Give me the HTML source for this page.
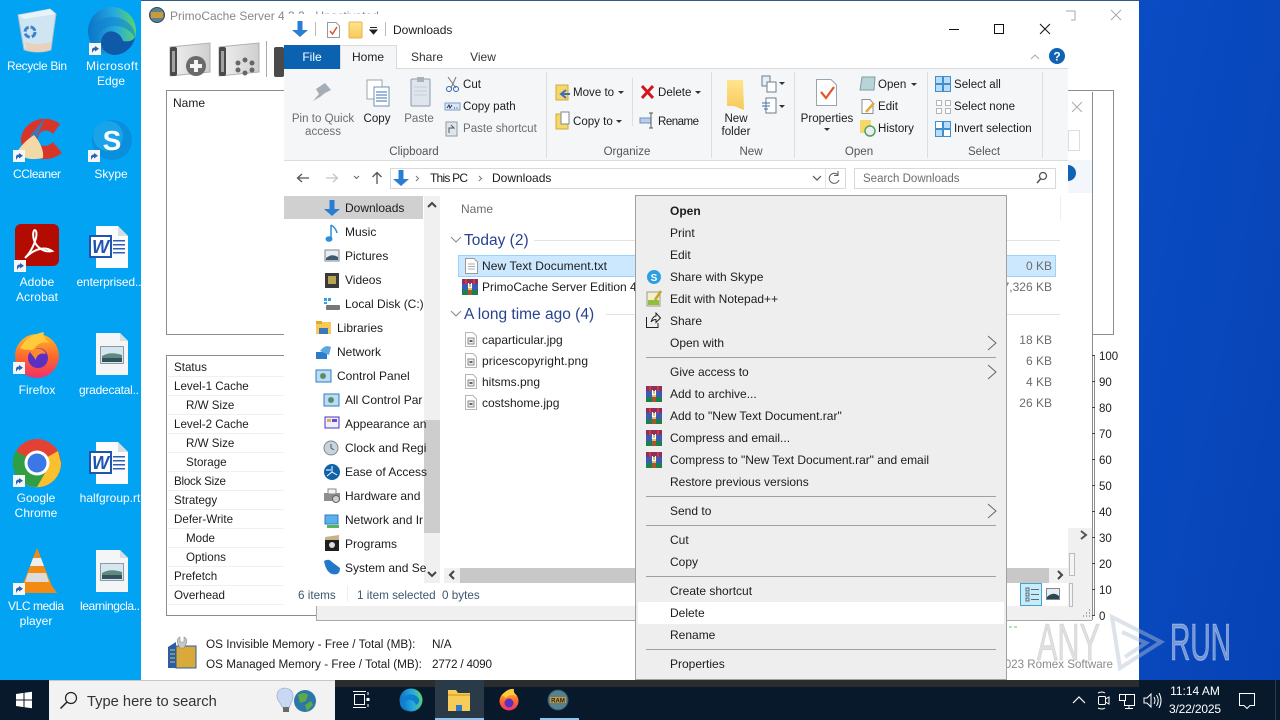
<!DOCTYPE html>
<html><head><meta charset="utf-8"><title>Desktop</title>
<style>
html,body{margin:0;padding:0;width:1280px;height:720px;overflow:hidden;background:#000}
svg{display:block;position:absolute;left:0;top:0;font-size:12px}
text{font-family:"Liberation Sans",sans-serif;fill:#1c1c1c;white-space:pre}
.m{text-anchor:middle}.e{text-anchor:end}
.d{fill:#fff}
.g{fill:#6d6d6d}.r{fill:#444}.h{fill:#2a4390;font-size:15.5px}
</style></head><body>
<svg width="1280" height="720" viewBox="0 0 1280 720" xmlns="http://www.w3.org/2000/svg">
<defs>
<linearGradient id="bl" x1="0" x2="1" y1="0" y2="1"><stop offset="0" stop-color="#0a4cc4"/><stop offset="1" stop-color="#0642b4"/></linearGradient>
<linearGradient id="eg" x1="0" x2="1" y1="0.3" y2="0.2"><stop offset="0" stop-color="#0c74c6"/><stop offset=".55" stop-color="#27a9e0"/><stop offset="1" stop-color="#5ad669"/></linearGradient>
<linearGradient id="ff" x1="0" x2="0" y1="0" y2="1"><stop offset="0" stop-color="#ffb82e"/><stop offset=".5" stop-color="#ff6a2c"/><stop offset="1" stop-color="#f0306a"/></linearGradient>
<linearGradient id="fld" x1="0" x2="0" y1="0" y2="1"><stop offset="0" stop-color="#ffe48e"/><stop offset="1" stop-color="#f7c95a"/></linearGradient>
<linearGradient id="dk" x1="0" x2="1" y1="0" y2="0"><stop offset="0" stop-color="#f0f0f0"/><stop offset="1" stop-color="#cfcfcf"/></linearGradient>
<g id="sc"><rect width="12" height="12" fill="#f4f6f8"/><path d="M3 10 V7 Q3 4.500 6 4.500 V3 L10 5.800 L6 8.500 V7 Q4.500 7 3 10Z" fill="#2a62b4"/></g>
<g id="rar"><rect width="16" height="5" fill="#8c2f5f"/><rect x="3" width="2" height="5" fill="#d23a3a"/><rect x="11" width="2" height="5" fill="#d23a3a"/><rect y="5" width="16" height="6" fill="#3b58bb"/><rect x="6" y="5" width="4" height="6" fill="#d9c36a"/><rect y="11" width="16" height="5" fill="#1e8049"/><rect x="6" y="11" width="4" height="5" fill="#a8552f"/><path d="M6.500 4 V8.500 H9.500 V4" fill="none" stroke="#fff" stroke-width="1.100"/></g>
<g id="pg"><path d="M.5 .5 H8 L11.500 4 V14.500 H.5Z" fill="#fff" stroke="#b5b5b5"/><rect x="3" y="6" width="6" height="6" fill="#eee" stroke="#8a8a8a"/><rect x="4.500" y="8" width="3" height="2" fill="#666"/></g>
<g id="doc"><path d="M0 0 H22 L32 10 V42 H0Z" fill="#fbfcfd"/><path d="M22 0 V10 H32Z" fill="#d8dde2"/><rect x="17" y="14" width="12" height="1.500" fill="#2f5fb2"/><rect x="17" y="18" width="12" height="1.500" fill="#2f5fb2"/><rect x="17" y="22" width="12" height="1.500" fill="#2f5fb2"/><rect x="17" y="26" width="12" height="1.500" fill="#2f5fb2"/><rect x="-6" y="10" width="21" height="21" fill="#fff" stroke="#1f55b0" stroke-width="2"/><text x="4.500" y="27" class="m" style="font-size:18px;font-weight:bold;font-style:italic;fill:#1f55b0">W</text></g>
<g id="imgd"><path d="M0 0 H24 L32 8 V42 H0Z" fill="#f4f5f6"/><path d="M24 0 V8 H32Z" fill="#d8dde2"/><rect x="4.500" y="13.500" width="23" height="17" fill="#d4e6ef" stroke="#8d9aa5"/><path d="M6 23 Q14 18 26 22 V29 H6Z" fill="#5f8a7f"/><rect x="6" y="25" width="20" height="4" fill="#35525c"/></g>
<g id="disk"><path d="M0 4 L40 0 V29 L0 33Z" fill="url(#dk)" stroke="#b0b0b0"/><rect x="0" y="4" width="7" height="29" rx="2" fill="#4a4a4a"/><rect x="2" y="8" width="3" height="21" fill="#a3a3a3"/></g>
</defs>

<!-- desktop -->
<rect width="1280" height="720" fill="#02a3f3"/>
<rect x="1139" width="141" height="720" fill="url(#bl)"/>

<!-- recycle bin -->
<path d="M18 15 L50 9 L56 14 L51 50 Q38 54 24 50Z" fill="#cfe5f2" stroke="#9fbfd2"/>
<path d="M18 15 L50 9 L56 14 L24 19Z" fill="#e8f3f9"/>
<path d="M26 50 Q38 54 50 50 L51 42 Q38 46 25 42Z" fill="#e9d2bb"/>
<circle cx="30" cy="32" r="5" fill="none" stroke="#3b82d0" stroke-width="3" stroke-dasharray="6 2"/>
<!-- edge -->
<circle cx="112" cy="31" r="24" fill="url(#eg)"/>
<path d="M89 36 C90 22 108 12 122 19 C131 23 136 31 135 38 C130 28 116 22 104 29 C96 34 94 44 100 50 C94 47 89 42 89 36Z" fill="#0f7fd0" fill-opacity=".55"/>
<path d="M103 36 C108 28 120 31 123 41 C128 42 133 41 135 37 C134 46 125 55 114 55 C103 54 98 44 103 36Z" fill="#0f5aa8"/>
<use href="#sc" x="89" y="43"/>
<text x="37" y="70" class="d m" textLength="60">Recycle Bin</text>
<text x="112" y="70" class="d m" textLength="52">Microsoft</text><text x="111" y="85" class="d m">Edge</text>
<!-- ccleaner -->
<path d="M60 124 C46 113 24 120 21 138 C19 155 44 167 62 153 L53 142 C46 149 37 146 38 138 C39 130 48 128 53 134Z" fill="#d8352a"/>
<path d="M45 118 L36 140 L30 136Z" fill="#3f76b8"/>
<path d="M34 135 C26 140 20 147 17 152 C24 160 34 160 43 158 C44 150 40 142 34 135Z" fill="#f4d9a8"/>
<use href="#sc" x="13" y="150"/>
<!-- skype -->
<circle cx="112" cy="140" r="20" fill="#0a8fdc"/><circle cx="108" cy="136" r="15" fill="#19a4ea"/>
<text x="112" y="150" class="m" style="font-size:28px;font-weight:bold;fill:#fff">S</text>
<use href="#sc" x="88" y="150"/>
<text x="37" y="178" class="d m" textLength="48">CCleaner</text>
<text x="111" y="178" class="d m">Skype</text>
<!-- acrobat -->
<rect x="15" y="224" width="44" height="42" rx="6" fill="#b30b00"/>
<path d="M25 258 C33 250 38 236 36 231 C34 228 32 233 34 240 C36 247 44 253 52 251 C46 247 36 247 25 258Z" fill="none" stroke="#fff" stroke-width="2"/>
<use href="#sc" x="14" y="260"/>
<use href="#doc" x="96" y="226"/>
<text x="37" y="286" class="d m">Adobe</text><text x="37" y="301" class="d m" textLength="42">Acrobat</text>
<text x="109" y="286" class="d m" textLength="65">enterprised..</text>
<!-- firefox -->
<circle cx="37" cy="356" r="22" fill="url(#ff)"/>
<circle cx="38" cy="358" r="10" fill="#5b2fc4"/>
<path d="M20 348 C26 338 34 334 44 332 C42 338 48 342 52 344 C44 340 36 344 34 350 C28 350 24 350 20 348Z" fill="#ffcb3a"/>
<path d="M30 352 C34 346 44 348 46 354 C40 352 36 356 36 360Z" fill="#ff8a2a"/>
<use href="#sc" x="13" y="362"/>
<use href="#imgd" x="96" y="333"/>
<text x="37" y="394" class="d m">Firefox</text>
<text x="109" y="394" class="d m" textLength="60">gradecatal..</text>
<!-- chrome -->
<circle cx="37" cy="463" r="24" fill="#e34133"/>
<path d="M37 463 L16 451 A24 24 0 0 0 25 484 Z" fill="#2f9e44"/>
<path d="M37 463 L25 484 A24 24 0 0 0 61 463 L58 451Z" fill="#fbc02d"/>
<path d="M16 475 A24 24 0 0 0 37 487 L49 466 L37 463Z" fill="#2f9e44"/>
<circle cx="37" cy="463" r="12.500" fill="#fff"/><circle cx="37" cy="463" r="9.500" fill="#3b78e7"/>
<use href="#sc" x="13" y="475"/>
<use href="#doc" x="96" y="442"/>
<text x="36" y="502" class="d m">Google</text><text x="36" y="517" class="d m">Chrome</text>
<text x="110" y="502" class="d m">halfgroup.rt</text>
<!-- vlc -->
<path d="M22 586 L30 566 H44 L52 586 L57 593 H20Z" fill="#f28a14"/>
<path d="M33 558 L37 548 L41 558Z" fill="#f28a14"/><path d="M33 558 H41 L44 566 H30Z" fill="#eee"/>
<path d="M28 573 H46 L49 582 H25Z" fill="#dcdcdc"/>
<use href="#sc" x="13" y="583"/>
<use href="#imgd" x="96" y="550"/>
<text x="36" y="610" class="d m" textLength="56">VLC media</text><text x="36" y="625" class="d m">player</text>
<text x="110" y="610" class="d m" textLength="60">learningcla..</text>

<!-- PrimoCache window -->
<rect x="141" y="0" width="998" height="680" fill="#fff"/>
<rect x="141" y="0" width="998" height="1" fill="#2e5d8c"/>
<circle cx="157" cy="15" r="7.500" fill="#5b7f93" stroke="#2c4a5e"/><rect x="151" y="12" width="12" height="6" fill="#c99a3a"/>
<text x="170" y="20" class="g" style="fill:#888">PrimoCache Server 4.3.2 - Unactivated</text>
<path d="M1066 11 H1075 V20 H1071" fill="none" stroke="#aaa"/>
<path d="M1111 10 L1121 20 M1121 10 L1111 20" stroke="#aaa" fill="none"/>
<use href="#disk" x="170" y="43"/><circle cx="196" cy="66" r="10" fill="#6a6a6a"/><path d="M196 60 V72 M190 66 H202" stroke="#f4f4f4" stroke-width="4"/>
<use href="#disk" x="219" y="43"/>
<circle cx="245" cy="60" r="2.500" fill="#666"/><circle cx="238" cy="63" r="2.500" fill="#666"/><circle cx="252" cy="63" r="2.500" fill="#666"/><circle cx="238" cy="70" r="2.500" fill="#666"/><circle cx="252" cy="70" r="2.500" fill="#666"/><circle cx="245" cy="73" r="2.500" fill="#666"/>
<rect x="266" y="41" width="1" height="36" fill="#aaa"/>
<rect x="274" y="47" width="10" height="30" rx="2" fill="#4a4a4a"/>
<rect x="166.500" y="90.500" width="150" height="244" fill="#fff" stroke="#8c8c8c"/>
<text x="173" y="107">Name</text>
<rect x="166.500" y="355.500" width="150" height="260" fill="#fff" stroke="#8c8c8c"/>
<g fill="#f0f0f0"><rect x="168" y="376" width="116" height="1"/><rect x="168" y="395" width="116" height="1"/><rect x="168" y="414" width="116" height="1"/><rect x="168" y="433" width="116" height="1"/><rect x="168" y="452" width="116" height="1"/><rect x="168" y="471" width="116" height="1"/><rect x="168" y="490" width="116" height="1"/><rect x="168" y="509" width="116" height="1"/><rect x="168" y="528" width="116" height="1"/><rect x="168" y="547" width="116" height="1"/><rect x="168" y="566" width="116" height="1"/><rect x="168" y="585" width="116" height="1"/><rect x="168" y="604" width="116" height="1"/></g>
<g style="font-size:11.600px"><text x="174" y="371">Status</text><text x="174" y="390">Level-1 Cache</text><text x="186" y="409">R/W Size</text><text x="174" y="428">Level-2 Cache</text><text x="186" y="447">R/W Size</text><text x="186" y="466">Storage</text><text x="174" y="485" textLength="52">Block Size</text><text x="174" y="504">Strategy</text><text x="174" y="523">Defer-Write</text><text x="186" y="542">Mode</text><text x="186" y="561">Options</text><text x="174" y="580">Prefetch</text><text x="174" y="599">Overhead</text></g>
<!-- memory row -->
<path d="M168 647 L176 642 V668 H168Z" fill="#2a5ca8"/><path d="M170 650 h5 M170 654 h5 M170 658 h5 M170 662 h5" stroke="#c8d050"/><rect x="176" y="646" width="20" height="22" fill="#d9a93a" stroke="#2a5ca8"/>
<path d="M180 648 C176 642 177 638 180 637 L180 642 H184 L184 637 C187 638 188 642 184 648Z" fill="#c8c8c8" stroke="#888" stroke-width=".6"/>
<g style="font-size:11.750px"><text x="206" y="648">OS Invisible Memory - Free / Total (MB):</text><text x="432" y="648">N/A</text>
<text x="206" y="668">OS Managed Memory - Free / Total (MB):</text><text x="432" y="668" textLength="60">2772 / 4090</text></g>
<text x="1113" y="668" class="e" style="fill:#8a8a8a;font-size:11.600px">2023 Romex Software</text>
<!-- right of explorer -->
<rect x="1068" y="160" width="24" height="33" fill="#f3f6fa"/>
<rect x="1068.500" y="130.500" width="11" height="20" fill="#fff" stroke="#ddd"/>
<path d="M1068 90.500 H1113.500 V334.500 H1092" fill="none" stroke="#8c8c8c"/>
<rect x="1092" y="92" width="1" height="528" fill="#8c8c8c"/>
<path d="M1072 102 L1082 112 M1082 102 L1072 112" stroke="#aaa" fill="none"/>
<circle cx="1068" cy="173" r="8" fill="#0f62b4"/>
<rect x="1068" y="528" width="24" height="92" fill="#f0f0f0"/>
<rect x="1006" y="606" width="86" height="14" fill="#f0f0f0"/>
<rect x="316" y="606" width="320" height="14" fill="#f0f0f0"/>
<rect x="316" y="620" width="776" height="1" fill="#a8a8a8"/><rect x="316" y="606" width="1" height="14" fill="#a8a8a8"/>
<path d="M1081 531 L1086 535 L1081 539" fill="none" stroke="#555" stroke-width="2"/>
<rect x="1069.500" y="553.500" width="5" height="22" fill="#f4f4f4" stroke="#bbb"/>
<rect x="1069.500" y="583.500" width="3" height="23" fill="#f4f4f4" stroke="#bbb"/>
<path d="M1089 610 h1 M1086 613 h1 M1089 613 h1 M1083 616 h1 M1086 616 h1 M1089 616 h1" stroke="#aaa" stroke-width="2"/>
<path d="M1009 627 h3 M1014 627 h3" stroke="#6cc070" fill="none"/>
<!-- chart axis -->
<rect x="1094" y="355" width="1" height="260" fill="#8c8c8c"/>
<path d="M1092 355.500 h3 M1092 381.500 h3 M1092 407.500 h3 M1092 433.500 h3 M1092 459.500 h3 M1092 485.500 h3 M1092 511.500 h3 M1092 537.500 h3 M1092 563.500 h3 M1092 589.500 h3 M1092 615.500 h3" stroke="#444" fill="none"/>
<g style="font-size:11.500px"><text x="1099" y="360">100</text><text x="1099" y="386">90</text><text x="1099" y="412">80</text><text x="1099" y="438">70</text><text x="1099" y="464">60</text><text x="1099" y="490">50</text><text x="1099" y="516">40</text><text x="1099" y="542">30</text><text x="1099" y="568">20</text><text x="1099" y="594">10</text><text x="1099" y="620">0</text></g>

<!-- Explorer window -->
<rect x="284" y="14" width="784" height="592" fill="#fff"/>
<path d="M297.500 21 H302.500 V30 H308 L300 37 L292 30 H297.500Z" fill="#2b7cd3"/>
<rect x="315" y="22" width="1" height="14" fill="#bbb"/>
<path d="M327.500 22.500 H336 L339.500 26 V37.500 H327.500Z" fill="#fff" stroke="#999"/><path d="M330 31 L332.500 34 L337 27" stroke="#d8552c" stroke-width="1.500" fill="none"/>
<rect x="349" y="22" width="13" height="16" rx="1" fill="url(#fld)" stroke="#e2b64f"/>
<path d="M370 27.500 h7 M370 30 L373.500 34 L377 30Z" stroke="#222" fill="#222"/>
<rect x="385" y="22" width="1" height="14" fill="#bbb"/>
<text x="393" y="34">Downloads</text>
<rect x="949" y="29" width="10" height="1" fill="#111"/>
<rect x="994.500" y="24.500" width="9" height="9" fill="none" stroke="#111"/>
<path d="M1040 24 L1050 34 M1050 24 L1040 34" stroke="#111" fill="none"/>
<path d="M1031 59 L1035 55 L1039 59" stroke="#aaa" fill="none"/>
<circle cx="1057" cy="56" r="8" fill="#0f62b4"/><text x="1057" y="60.500" class="m" style="font-weight:bold;font-size:12px;fill:#fff">?</text>

<!-- tabs and ribbon -->
<rect x="284" y="69" width="784" height="91" fill="#f5f6f7"/>
<rect x="397" y="68" width="671" height="1" fill="#dadbdc"/>
<rect x="284" y="160" width="784" height="1" fill="#dadbdc"/>
<rect x="284" y="45" width="56" height="24" fill="#0a62b0"/>
<path d="M340.500 69 V45.500 H396.500 V69" fill="#f5f6f7" stroke="#dadbdc"/>
<text x="312" y="61" class="m" style="fill:#fff">File</text><text x="368" y="61" class="m">Home</text><text x="427" y="61" class="m" style="fill:#333">Share</text><text x="483" y="61" class="m" style="fill:#333">View</text>
<g fill="#dcdee0"><rect x="546" y="72" width="1" height="86"/><rect x="632" y="78" width="1" height="48"/><rect x="711" y="72" width="1" height="86"/><rect x="794" y="72" width="1" height="86"/><rect x="927" y="72" width="1" height="86"/><rect x="1042" y="72" width="1" height="86"/></g>
<g style="font-size:11.550px">
<!-- clipboard -->
<path d="M313 101 L319 94 L316 89 L325 83 L331 90 L325 93 L320 97Z" fill="#a5adb6"/>
<text x="323" y="122" class="m g">Pin to Quick</text><text x="323" y="135" class="m g">access</text>
<rect x="367" y="80" width="15" height="19" fill="#fff" stroke="#9aa4ae"/><rect x="374" y="87" width="15" height="19" fill="#fff" stroke="#6f8fb8"/><path d="M376 92 h11 M376 95 h11 M376 98 h11 M376 101 h11" stroke="#3b6cb4"/>
<text x="377" y="122" class="m">Copy</text>
<rect x="411" y="79" width="19" height="27" rx="1" fill="#dfe5ec" stroke="#8f9aa6"/><rect x="417" y="77" width="7" height="5" fill="#a9b1ba"/><path d="M414 87 h13 M414 91 h13 M414 95 h13" stroke="#c4cdd6"/>
<text x="419" y="122" class="m g">Paste</text>
<path d="M448 77 L456 88 M456 77 L451 88" stroke="#777"/><circle cx="449" cy="89" r="2.500" fill="none" stroke="#2a62b4"/><circle cx="456" cy="89" r="2.500" fill="none" stroke="#2a62b4"/>
<text x="463" y="88">Cut</text>
<rect x="445" y="103" width="15" height="7" fill="#dbe7f5" stroke="#7aa0d0"/><path d="M447 108 l2 -3 l1 3 l2 -3 M454 108 h1 M456.500 108 h1" stroke="#335" fill="none"/>
<text x="463" y="110">Copy path</text>
<rect x="446" y="122" width="11" height="14" fill="#dfe5ec" stroke="#8f9aa6"/><path d="M449 133 V128 H454 L451 125" stroke="#555" fill="none"/>
<text x="463" y="132" class="g">Paste shortcut</text>
<text x="414" y="155" class="m g" style="fill:#555">Clipboard</text>
<!-- organize -->
<rect x="556" y="85" width="12" height="15" fill="#f6d76a" stroke="#d2aa3d"/><path d="M562 94 H570 M566 90 L561 94 L566 98" stroke="#3c70b8" stroke-width="2" fill="none"/>
<text x="573" y="96">Move to</text><path d="M618 91 h6 l-3 3z" fill="#333"/>
<rect x="556" y="114" width="12" height="15" fill="#f6d76a" stroke="#d2aa3d"/><rect x="561" y="112" width="8" height="12" fill="#fff" stroke="#7c8794"/>
<text x="573" y="125">Copy to</text><path d="M616 120 h6 l-3 3z" fill="#333"/>
<path d="M642 86 L653 98 M653 86 L642 98" stroke="#d3151c" stroke-width="3" fill="none"/>
<text x="658" y="96">Delete</text><path d="M695 91 h6 l-3 3z" fill="#333"/>
<rect x="640" y="118" width="11" height="5" fill="#b9cdea" stroke="#6b8fc2"/><path d="M651 113 V128 M649 113 h4 M649 128 h4" stroke="#555"/>
<text x="658" y="125" textLength="41">Rename</text>
<text x="627" y="155" class="m" style="fill:#555">Organize</text>
<!-- new -->
<path d="M727 80 H743 L744 110 L734 106 H727Z" fill="url(#fld)"/>
<text x="736" y="122" class="m">New</text><text x="736" y="135" class="m">folder</text>
<rect x="762" y="76" width="8" height="10" fill="#e6eef7" stroke="#6c7c8e"/><rect x="767" y="82" width="9" height="10" fill="#fff" stroke="#6c7c8e"/><path d="M779 82 h6 l-3 3z" fill="#333"/>
<rect x="766" y="98" width="10" height="15" fill="#fff" stroke="#6c7c8e"/><path d="M762 103 h8 M762 106 h8 M764 109 h4" stroke="#3a6cb0"/><path d="M779 105 h6 l-3 3z" fill="#333"/>
<text x="751" y="155" class="m" style="fill:#555">New</text>
<!-- open -->
<path d="M816.500 79.500 H831 L836.500 85 V105.500 H816.500Z" fill="#fff" stroke="#9aa4ae"/><path d="M821 92 L826 98 L834 87" stroke="#e0572b" stroke-width="2.200" fill="none"/>
<text x="827" y="122" class="m">Properties</text><path d="M824 128 h6 l-3 3z" fill="#333"/>
<path d="M862 77 H875 L874 90 H860Z" fill="#b9d4d8" stroke="#7f9da2"/>
<text x="878" y="88">Open</text><path d="M911 83 h6 l-3 3z" fill="#333"/>
<path d="M862 99.500 H870 L873 103 V113.500 H862Z" fill="#fff" stroke="#8a8f95"/><path d="M866 112 L874 103" stroke="#e3a83c" stroke-width="2.500"/>
<text x="878" y="110">Edit</text>
<rect x="860" y="120" width="11" height="13" fill="#f6d76a"/><circle cx="870" cy="131" r="5" fill="#e9eef2" stroke="#57a15a" stroke-width="1.500"/>
<text x="878" y="132">History</text>
<text x="859" y="155" class="m" style="fill:#555">Open</text>
<!-- select -->
<g fill="#bcdcf6" stroke="#3c8fd0"><rect x="935.500" y="76.500" width="7" height="7"/><rect x="943.500" y="76.500" width="7" height="7"/><rect x="935.500" y="84.500" width="7" height="7"/><rect x="943.500" y="84.500" width="7" height="7"/></g>
<text x="954" y="88">Select all</text>
<g fill="#fff" stroke="#b5b5b5"><rect x="936.500" y="100.500" width="5" height="5"/><rect x="945.500" y="100.500" width="5" height="5"/><rect x="936.500" y="108.500" width="5" height="5"/><rect x="945.500" y="108.500" width="5" height="5"/></g>
<text x="954" y="110">Select none</text>
<g stroke="#3c8fd0"><rect x="935.500" y="121.500" width="7" height="7" fill="#fff"/><rect x="943.500" y="121.500" width="7" height="7" fill="#bcdcf6"/><rect x="935.500" y="129.500" width="7" height="7" fill="#bcdcf6"/><rect x="943.500" y="129.500" width="7" height="7" fill="#fff"/></g>
<text x="954" y="132">Invert selection</text>
<text x="984" y="155" class="m" style="fill:#555">Select</text>
</g>

<!-- address row -->
<path d="M309 178 H298 M302 174 L297.500 178 L302 182" stroke="#555" stroke-width="1.300" fill="none"/>
<path d="M326 178 H337 M333 174 L337.500 178 L333 182" stroke="#c4c4c4" stroke-width="1.300" fill="none"/>
<path d="M354 176 L356.500 178.500 L359 176" stroke="#666" fill="none"/>
<path d="M377 184 V173 M372.500 177 L377 172.500 L381.500 177" stroke="#555" stroke-width="1.300" fill="none"/>
<rect x="390.500" y="168.500" width="455" height="20" fill="#fff" stroke="#d9d9d9"/>
<rect x="825" y="169" width="1" height="19" fill="#e5e5e5"/>
<path d="M398.500 170 H403.500 V179 H409 L401 186 L393 179 H398.500Z" fill="#2b7cd3"/>
<path d="M416 176 L418.500 178.500 L416 181" stroke="#777" fill="none"/>
<text x="430" y="182" textLength="38">This PC</text>
<path d="M479 176 L481.500 178.500 L479 181" stroke="#777" fill="none"/>
<text x="492" y="182">Downloads</text>
<path d="M813 176 L817 180 L821 176" stroke="#555" stroke-width="1.200" fill="none"/>
<path d="M838 175 A5 5 0 1 0 839 180 M838 171 V175.500 H834" stroke="#666" stroke-width="1.100" fill="none"/>
<rect x="854.500" y="168.500" width="201" height="20" fill="#fff" stroke="#d9d9d9"/>
<text x="863" y="182" class="g" style="font-size:11.500px">Search Downloads</text>
<circle cx="1043" cy="176" r="3.500" fill="none" stroke="#555" stroke-width="1.300"/><path d="M1040.500 179 L1037 183" stroke="#555" stroke-width="1.600"/>

<!-- nav pane -->
<rect x="284" y="196" width="139" height="23" fill="#d0d0d0"/>
<rect x="424" y="196" width="16" height="387" fill="#f0f0f0"/>
<rect x="424" y="420" width="16" height="113" fill="#cdcdcd"/>
<path d="M428 207 L432 203 L436 207" stroke="#444" stroke-width="2" fill="none"/>
<path d="M428 572 L432 576 L436 572" stroke="#444" stroke-width="2" fill="none"/>
<path d="M329.500 200 H334.500 V209 H340 L332 216 L324 209 H329.500Z" fill="#2b7cd3"/>
<text x="345" y="212">Downloads</text>
<path d="M331 225 V238" stroke="#2b8fdc" stroke-width="1.500"/><path d="M331 225 Q336 228 337 233" stroke="#2b8fdc" fill="none" stroke-width="1.500"/><ellipse cx="329" cy="239" rx="3.500" ry="2.800" fill="#2b8fdc"/>
<text x="345" y="236">Music</text>
<rect x="325" y="250" width="14" height="11" fill="#e8edf2" stroke="#7c8894"/><path d="M326 258 Q332 253 338 257 V260 H326Z" fill="#3e5a6c"/>
<text x="345" y="260">Pictures</text>
<rect x="325" y="273" width="14" height="15" fill="#3a3a3a"/><rect x="328" y="276" width="8" height="8" fill="#b9a456"/>
<text x="345" y="284">Videos</text>
<rect x="326" y="305" width="14" height="5" rx="1" fill="#777"/><rect x="324" y="298" width="3" height="3" fill="#34a0dd"/><rect x="328" y="298" width="3" height="3" fill="#34a0dd"/><rect x="324" y="302" width="3" height="2" fill="#34a0dd"/>
<text x="345" y="308">Local Disk (C:)</text>
<rect x="316" y="322" width="15" height="12" fill="#f6ca55"/><rect x="319" y="328" width="9" height="6" fill="#3a78b8"/><rect x="316" y="321" width="6" height="3" fill="#e2a92f"/>
<text x="337" y="332">Libraries</text>
<rect x="316" y="352" width="11" height="7" fill="#2d7cc8"/><path d="M320 351 Q325 344 331 347 L329 355Z" fill="#5aa6e0"/>
<text x="337" y="356">Network</text>
<rect x="316" y="370" width="15" height="12" fill="#bcdcf2" stroke="#2d7cc8"/><circle cx="323" cy="376" r="3" fill="#5b8f6a"/>
<text x="337" y="380">Control Panel</text>
<rect x="324" y="394" width="15" height="12" fill="#bcdcf2" stroke="#2d7cc8"/><circle cx="331" cy="400" r="3" fill="#5b8f6a"/>
<text x="345" y="404">All Control Par</text>
<rect x="325" y="417" width="14" height="11" fill="#eef" stroke="#4433cc"/><rect x="327" y="419" width="4" height="3" fill="#e0b040"/><rect x="332" y="419" width="5" height="3" fill="#6a4ad0"/>
<text x="345" y="428">Appearance an</text>
<circle cx="331" cy="448" r="7" fill="#c8d4dc" stroke="#7c8894"/><path d="M331 444 V448 L334 450" stroke="#555" fill="none"/>
<text x="345" y="452">Clock and Regi</text>
<circle cx="332" cy="472" r="8" fill="#0f62a8"/><path d="M332 466 V472 L337 475 M332 472 L327 476 M326 470 H331" stroke="#fff" fill="none"/>
<text x="345" y="476">Ease of Access</text>
<rect x="324" y="493" width="16" height="8" fill="#8e8e8e"/><rect x="328" y="489" width="8" height="5" fill="#f5f5f5" stroke="#888"/><circle cx="336" cy="499" r="3.500" fill="#c9d2da" stroke="#666"/>
<text x="345" y="500">Hardware and</text>
<rect x="325" y="515" width="13" height="9" fill="#5ab0ea" stroke="#2d7cc8"/><rect x="327" y="525" width="12" height="3" fill="#57b45a"/>
<text x="345" y="524">Network and Ir</text>
<rect x="325" y="537" width="14" height="14" fill="#1f1f1f"/><path d="M325 537 L339 535 V540 H325Z" fill="#c9b188"/><circle cx="332" cy="545" r="3" fill="#ddd"/>
<text x="345" y="548">Programs</text>
<path d="M324 561 Q329 558 332 562 L340 568 Q340 576 332 574 Q326 572 324 561Z" fill="#2279c9"/>
<text x="345" y="572">System and Se</text>

<!-- file list -->
<text x="461" y="213" class="g">Name</text>
<path d="M451 237 L456 242 L461 237" stroke="#8a8a8a" fill="none"/>
<text x="464" y="245" class="h">Today (2)</text>
<rect x="534" y="240" width="102" height="1" fill="#e2e2e2"/><rect x="1006" y="240" width="54" height="1" fill="#e2e2e2"/>
<path d="M451 311 L456 316 L461 311" stroke="#8a8a8a" fill="none"/>
<text x="464" y="319" class="h">A long time ago (4)</text>
<rect x="606" y="314" width="30" height="1" fill="#e2e2e2"/><rect x="1006" y="314" width="54" height="1" fill="#e2e2e2"/>
<rect x="458.500" y="255.500" width="597" height="21" fill="#cce8ff" stroke="#99d1ff"/>
<path d="M465.500 258.500 H474 L477.500 262 V273.500 H465.500Z" fill="#fff" stroke="#9a9a9a"/><path d="M468 264 h7 M468 266.500 h7 M468 269 h7" stroke="#aaa"/>
<text x="482" y="270" textLength="125">New Text Document.txt</text>
<use href="#rar" x="462" y="279"/>
<text x="482" y="291">PrimoCache Server Edition 4.3.2 Setup.exe</text>
<use href="#pg" x="465" y="332"/><text x="482" y="344">caparticular.jpg</text>
<use href="#pg" x="465" y="353"/><text x="482" y="365" textLength="106">pricescopyright.png</text>
<use href="#pg" x="465" y="374"/><text x="482" y="386">hitsms.png</text>
<use href="#pg" x="465" y="395"/><text x="482" y="407">costshome.jpg</text>
<g><text x="1052" y="270" class="e g">0 KB</text><text x="1052" y="291" class="e g">7,326 KB</text><text x="1052" y="344" class="e g">18 KB</text><text x="1052" y="365" class="e g">6 KB</text><text x="1052" y="386" class="e g">4 KB</text><text x="1052" y="407" class="e g">26 KB</text></g>
<rect x="1060" y="196" width="1" height="24" fill="#eee"/>
<!-- bottom scrollbar -->
<rect x="444" y="568" width="624" height="15" fill="#f0f0f0"/>
<rect x="460" y="568" width="589" height="15" fill="#c8c8c8"/>
<path d="M454 571 L450 575 L454 579" stroke="#444" stroke-width="2" fill="none"/>
<path d="M1058 571 L1062 575 L1058 579" stroke="#444" stroke-width="2" fill="none"/>
<!-- status -->
<g style="font-size:11.700px"><text x="298" y="599" style="fill:#3f5670">6 items</text>
<text x="357" y="599" style="fill:#3f5670">1 item selected</text>
<text x="442" y="599" style="fill:#3f5670">0 bytes</text></g>
<rect x="347" y="586" width="1" height="16" fill="#eee"/>
<rect x="1020.500" y="583.500" width="21" height="22" fill="#c5ecfb" stroke="#4aa0c8"/>
<path d="M1026 588 h3 v3 h-3z M1026 593 h3 v3 h-3z M1026 598 h3 v3 h-3z M1031 589.500 h8 M1031 594.500 h8 M1031 599.500 h8" stroke="#5a6a7a" fill="none"/>
<rect x="1046.500" y="588.500" width="13" height="11" fill="#e8edf2" stroke="#7c8894"/><path d="M1047 597 Q1053 591 1059 596 V599 H1047Z" fill="#2e4553"/>

<!-- context menu -->
<rect x="635.500" y="195.500" width="371" height="484" fill="#eeeeee" stroke="#a0a0a0"/>
<rect x="638" y="602" width="366" height="22" fill="#fff"/>
<g fill="#a0a0a0"><rect x="646" y="357" width="350" height="1"/><rect x="646" y="496" width="350" height="1"/><rect x="646" y="525" width="350" height="1"/><rect x="646" y="576" width="350" height="1"/><rect x="646" y="649" width="350" height="1"/></g>
<text x="670" y="215" style="font-weight:bold">Open</text>
<text x="670" y="237">Print</text><text x="670" y="259">Edit</text><text x="670" y="281">Share with Skype</text><text x="670" y="303">Edit with Notepad++</text><text x="670" y="325">Share</text><text x="670" y="347">Open with</text>
<text x="670" y="376">Give access to</text><text x="670" y="398">Add to archive...</text><text x="670" y="420">Add to "New Text Document.rar"</text><text x="670" y="442">Compress and email...</text><text x="670" y="464" textLength="259">Compress to "New Text Document.rar" and email</text><text x="670" y="486">Restore previous versions</text>
<text x="670" y="515">Send to</text><text x="670" y="544">Cut</text><text x="670" y="566">Copy</text><text x="670" y="595">Create shortcut</text><text x="670" y="617">Delete</text><text x="670" y="639">Rename</text><text x="670" y="668">Properties</text>
<path d="M988 336 L996 343 L988 350 M988 365 L996 372 L988 379 M988 504 L996 511 L988 518" stroke="#666" fill="none"/>
<circle cx="654" cy="277" r="7" fill="#2e9fe0"/><text x="654" y="281" class="m" style="font-size:10px;font-weight:bold;fill:#fff">S</text>
<rect x="647" y="292" width="13" height="14" fill="#f4f0cc" stroke="#999"/><rect x="648" y="300" width="11" height="5" fill="#8fbf3f"/><path d="M655 300 L661 291" stroke="#c9a227" stroke-width="2.500"/>
<path d="M646.500 317 V327.500 H658 V323 M651 322 Q653 316 656 316 V313 L660.500 318 L656 322.500 V319.500 Q653 319.500 651 322Z" fill="none" stroke="#222"/>
<use href="#rar" x="646" y="386"/><use href="#rar" x="646" y="408"/><use href="#rar" x="646" y="430"/><use href="#rar" x="646" y="452"/>

<!-- taskbar -->
<rect x="0" y="680" width="1280" height="40" fill="#07192a"/>
<rect x="335" y="680" width="804" height="7" fill="#2a2c2e"/>
<rect x="49" y="680" width="286" height="40" fill="#f2f2f2"/>
<rect x="49" y="680" width="286" height="1" fill="#c8c8c8"/>
<path d="M16 694 L23.500 692.900 V699.500 H16Z M24.500 692.800 L32 691.700 V699.500 H24.500Z M16 700.500 H23.500 V707.100 L16 706Z M24.500 700.500 H32 V708.300 L24.500 707.200Z" fill="#fff"/>
<circle cx="71" cy="698" r="5.500" fill="none" stroke="#222" stroke-width="1.200"/><path d="M67 702 L60.500 708.500" stroke="#222" stroke-width="1.500"/>
<text x="87" y="706" style="font-size:14.700px;fill:#333">Type here to search</text>
<path d="M285 688 C279 688 275 693 278 700 L283 708 H289 C291 702 295 697 292 692 C291 690 288 688 285 688Z" fill="#c9d8f2" stroke="#8aa0c8" stroke-width=".6"/><rect x="283" y="707" width="6" height="5" fill="#6a6a6a"/>
<circle cx="305" cy="701" r="11" fill="#2d76a8"/><path d="M298 695 Q304 691 308 695 L306 701 L300 703Z M305 705 L311 701 L313 705 L307 711Z" fill="#5fa84a"/>
<rect x="354.500" y="694.500" width="10" height="10" fill="none" stroke="#fff"/><path d="M353 691.500 H366 M353 707.500 H366 M368 692 V695 M368 704 V707" stroke="#fff" fill="none"/><rect x="366.500" y="698" width="3" height="3" fill="#fff"/>
<circle cx="411" cy="700" r="11.500" fill="url(#eg)"/><path d="M400 704 C402 694 414 691 419 699 C420 702 418 704 416 705 C414 700 409 698 405 702 C403 706 406 710 412 711 C406 712 401 709 400 704Z" fill="#0f7fd0"/>
<rect x="435" y="680" width="49" height="40" fill="#2b3a47"/>
<rect x="435" y="718" width="49" height="2" fill="#8ec4ee"/>
<path d="M448 690 H456 L458 693 H470 V711 H448Z" fill="#f6cd5a"/><rect x="448" y="694" width="22" height="2" fill="#e7ad33"/><rect x="456" y="705" width="6" height="6" fill="#2b7cc4"/>
<circle cx="509" cy="701" r="9.500" fill="url(#ff)"/><circle cx="509" cy="703" r="4.500" fill="#5b2fc4"/><path d="M502 695 Q508 688 514 689 Q513 693 517 696 Q510 693 506 698Z" fill="#ffcb3a"/>
<circle cx="558" cy="700" r="10" fill="#57808f" stroke="#2e5566"/><rect x="550" y="697" width="16" height="6" fill="#c6983c"/><text x="558" y="702.500" class="m" style="font-size:6px;font-weight:bold;fill:#222">RAM</text>
<rect x="540" y="718" width="39" height="2" fill="#8ec4ee"/>
<path d="M1073 703 L1079 697 L1085 703" stroke="#fff" fill="none" stroke-width="1.200"/>
<rect x="1098.500" y="696.500" width="7" height="8" rx="1" fill="none" stroke="#fff"/><path d="M1105.500 699 L1109 697 V704 L1105.500 702" fill="none" stroke="#fff"/><path d="M1098 693 Q1102 691 1105 693 M1098 708 Q1102 710 1105 708" stroke="#fff" fill="none"/>
<rect x="1124.500" y="694.500" width="10" height="11" fill="none" stroke="#fff"/><rect x="1119.500" y="694.500" width="6" height="6" fill="#07192a" stroke="#fff"/><path d="M1129 706 V708 M1125 708.500 H1133" stroke="#fff" fill="none"/>
<path d="M1144 698 H1147 L1151 694 V707 L1147 703 H1144Z M1154 697 Q1156 700.500 1154 704 M1156.500 695 Q1160 700.500 1156.500 706 M1159 693 Q1163 700.500 1159 708" fill="none" stroke="#fff"/>
<text x="1195" y="695" class="m" style="fill:#fff">11:14 AM</text>
<text x="1195" y="713" class="m" style="fill:#fff" textLength="52">3/22/2025</text>
<path d="M1239.500 693.500 H1254.500 V705.500 H1250 L1247 708.500 L1244 705.500 H1239.500Z" fill="none" stroke="#fff"/>
<rect x="1275" y="680" width="1" height="40" fill="#2a3a48"/>

<!-- watermark -->
<text x="1037" y="660" textLength="63" lengthAdjust="spacingAndGlyphs" style="font-size:52px;fill:#bbb;fill-opacity:.45;stroke:#bbb;stroke-opacity:.45;stroke-width:1">ANY</text>
<text x="1170" y="660" textLength="61" lengthAdjust="spacingAndGlyphs" style="font-size:52px;fill:#dfe8f8;fill-opacity:.5;stroke:#dfe8f8;stroke-opacity:.5;stroke-width:1">RUN</text>
<path d="M1112 617 L1161 642 L1120 668 Z M1122 632 L1146 643 L1125 657" fill="none" stroke="#b4c2d2" stroke-opacity=".45" stroke-width="4"/>
</svg>
</body></html>
